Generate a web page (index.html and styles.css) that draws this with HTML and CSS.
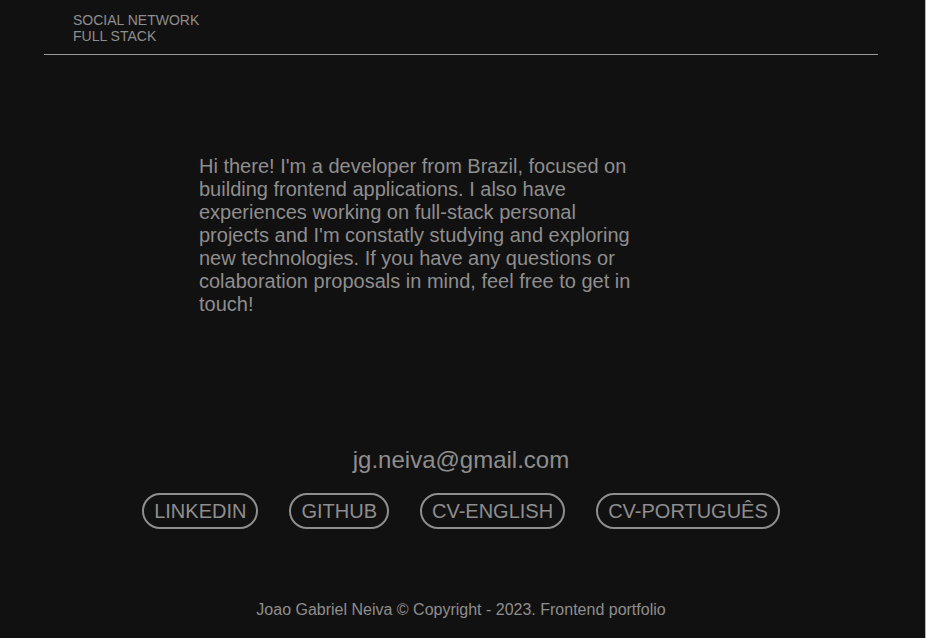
FILE: index.html
```html
<!DOCTYPE html>
<html lang="en">
<head>
<meta charset="utf-8">
<title>Portfolio</title>
<link rel="stylesheet" href="styles.css">
</head>
<body>
<div class="page">
  <header class="header">
    <div class="brand">SOCIAL NETWORK<br>FULL STACK</div>
  </header>
  <main class="main">
    <section class="about">
      <p class="bio">Hi there! I'm a developer from Brazil, focused on building frontend applications. I also have experiences working on full-stack personal projects and I'm constatly studying and exploring new technologies. If you have any questions or colaboration proposals in mind, feel free to get in touch!</p>
    </section>
    <section class="contact">
      <div class="email">jg.neiva@gmail.com</div>
      <nav class="links">
        <a class="pill" href="#">LINKEDIN</a>
        <a class="pill" href="#">GITHUB</a>
        <a class="pill" href="#">CV-ENGLISH</a>
        <a class="pill" href="#">CV-PORTUGUÊS</a>
      </nav>
    </section>
  </main>
  <footer class="footer">Joao Gabriel Neiva © Copyright - 2023. Frontend portfolio</footer>
</div>
</body>
</html>
```
FILE: styles.css
```css
html, body {
  margin: 0;
  padding: 0;
  height: 100%;
}
body {
  background: #121111;
  color: #8e8e8e;
  font-family: "Liberation Sans", Arial, sans-serif;
  border-right: 1px solid #a9b4c2;
  box-sizing: border-box;
}
.page {
  margin: 0 47px 0 44px;
  height: 638px;
  display: flex;
  flex-direction: column;
}
.header {
  border-bottom: 1px solid #9a9a9a;
  padding: 12px 0 10px 29px;
}
.brand {
  font-size: 14px;
  line-height: 16px;
}
.main {
  flex: 1;
  display: flex;
  flex-direction: column;
}
.about {
  padding: 100px 0 0 155px;
}
.bio {
  margin: 0;
  width: 440px;
  font-size: 20px;
  line-height: 23px;
}
.contact {
  margin-top: 130px;
  display: flex;
  flex-direction: column;
  align-items: center;
}
.email {
  font-size: 24px;
  line-height: 28px;
}
.links {
  margin-top: 19px;
  display: flex;
  gap: 31px;
}
.pill {
  display: block;
  box-sizing: border-box;
  height: 36px;
  color: #8e8e8e;
  text-decoration: none;
  font-size: 20px;
  line-height: 32px;
  padding: 0 10px;
  border: 2px solid #8e8e8e;
  border-radius: 18px;
}
.footer {
  text-align: center;
  font-size: 16px;
  line-height: 20px;
  padding-bottom: 18px;
}
```
